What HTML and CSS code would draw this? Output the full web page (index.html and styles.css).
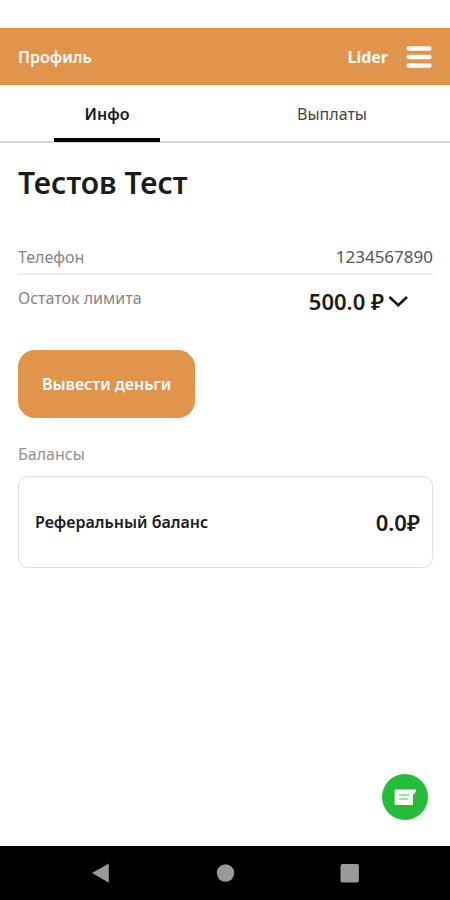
FILE: index.html
```html
<!DOCTYPE html>
<html lang="ru">
<head>
<meta charset="utf-8">
<meta name="viewport" content="width=device-width, initial-scale=1">
<title>Профиль</title>
<link rel="stylesheet" href="styles.css">
</head>
<body>
<header class="header">
  <h1 class="header-title">Профиль</h1>
  <span class="brand">Lider</span>
  <button class="menu" type="button" aria-label="Меню">
    <svg width="26" height="24" viewBox="0 0 26 24"><path d="M2.6 3.5H23.4M2.6 12H23.4M2.6 20.5H23.4" stroke="#fff" stroke-width="4.4" stroke-linecap="round"/></svg>
  </button>
</header>
<nav class="tabs">
  <button class="tab tab-active" type="button">Инфо</button>
  <button class="tab" type="button">Выплаты</button>
</nav>
<main class="content">
  <h2 class="name">Тестов Тест</h2>
  <dl class="details">
    <div class="row row-phone"><dt class="label">Телефон</dt><dd class="phone">1234567890</dd></div>
    <div class="row row-limit"><dt class="label">Остаток лимита</dt>
      <dd class="limit"><button class="limit-toggle" type="button">500.0 ₽
        <svg width="20" height="14" viewBox="0 0 20 14"><path d="M1.5 3L10.3 11.2L19 3" fill="none" stroke="#151515" stroke-width="2.6"/></svg></button></dd></div>
  </dl>
  <button class="withdraw" type="button">Вывести деньги</button>
  <h3 class="section">Балансы</h3>
  <div class="card"><span class="card-title">Реферальный баланс</span><span class="amount">0.0₽</span></div>
</main>
<button class="chat" type="button" aria-label="Чат">
  <svg width="24" height="18" viewBox="0 0 24 18"><path d="M1.8 1.5H23.2Q22.8 5 20 6.5V16Q20 17 19 17H2.6Q1.6 17 1.6 16V1.8Q1.6 1.5 1.8 1.5Z" fill="#fff"/><path d="M6 7H16M6 11H15" stroke="#7fd98a" stroke-width="1.6"/></svg>
</button>
<footer class="system-nav">
  <button type="button" aria-label="Назад"><svg width="20" height="20" viewBox="0 0 20 20"><path d="M2 10L18.8 0.5V19.7Z" fill="#9a9a9a"/></svg></button>
  <button type="button" aria-label="Домой"><svg width="20" height="20" viewBox="0 0 20 20"><circle cx="10.5" cy="10" r="8.7" fill="#9a9a9a"/></svg></button>
  <button type="button" aria-label="Недавние"><svg width="20" height="20" viewBox="0 0 20 20"><rect x="0.5" y="1" width="18.4" height="18.4" rx="2" fill="#9a9a9a"/></svg></button>
</footer>
</body>
</html>
```
FILE: styles.css
```css
* { box-sizing: border-box; }
body {
  margin: 0;
  min-height: 100vh;
  padding-top: 28px;
  display: flex;
  flex-direction: column;
  background: #fff;
  color: #1b1b1b;
  font: 16px/24px "Noto Sans", sans-serif;
}
h1, h2, h3, dl, dd { margin: 0; }
button { padding: 0; border: 0; background: none; color: inherit; font: inherit; }
svg { display: block; }
.header {
  display: flex;
  align-items: center;
  height: 57px;
  padding: 0 18px;
  background: #e0944c;
  color: #fff;
  font-weight: 700;
}
.header-title { flex: 1; font-size: 16px; font-weight: 600; }
.brand { margin-right: 18px; }
.tabs {
  display: grid;
  grid-template-columns: 1fr 1fr;
  height: 58px;
  border-bottom: 2px solid #d6d6d6;
}
.tab { position: relative; padding: 2px 11px 0 0; color: #444; }
.tab-active { color: #1b1b1b; font-weight: 600; }
.tab-active::after {
  content: "";
  position: absolute;
  left: 24%;
  right: 29%;
  bottom: -1px;
  height: 4px;
  background: #050505;
}
.content { flex: 1; padding: 20px 17px 0 18px; }
.name { font-size: 30px; line-height: 40px; font-weight: 600; }
.details { margin-top: 40px; }
.row { display: flex; justify-content: space-between; }
.row-phone { height: 32px; padding-top: 2px; border-bottom: 2px solid #ebebeb; }
.row-limit { padding: 11px 25px 0 0; }
.label { color: #858585; }
.phone { color: #555; font-size: 17px; }
.limit-toggle {
  display: flex;
  align-items: center;
  gap: 4px;
  font-size: 22px;
  line-height: 30px;
  font-weight: 600;
}
.withdraw {
  display: block;
  height: 68px;
  margin-top: 34px;
  padding: 0 24px;
  border-radius: 17px;
  background: #e0944c;
  color: #fff;
  font-weight: 600;
}
.section { margin-top: 24px; color: #929292; font-size: 16px; font-weight: 400; }
.card {
  display: flex;
  align-items: center;
  justify-content: space-between;
  height: 92px;
  margin-top: 10px;
  padding: 0 12px 0 16px;
  border: 1px solid #dedede;
  border-radius: 10px;
}
.card-title { font-weight: 600; }
.amount { font-size: 22px; font-weight: 600; }
.chat {
  position: fixed;
  right: 22px;
  bottom: 80px;
  display: grid;
  place-items: center;
  width: 46px;
  height: 46px;
  border-radius: 50%;
  background: #24bd38;
}
.system-nav {
  display: flex;
  align-items: center;
  justify-content: space-between;
  height: 54px;
  padding: 0 20%;
  background: #000;
}
```
